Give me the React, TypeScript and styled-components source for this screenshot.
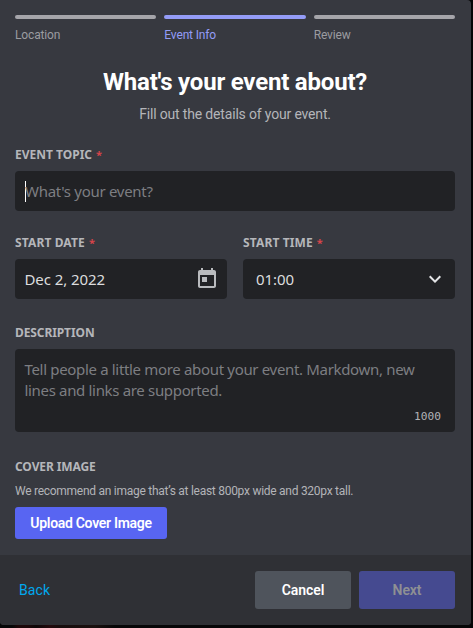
import React from 'react';
import styled, { createGlobalStyle } from 'styled-components';

const GlobalStyle = createGlobalStyle`
  * { box-sizing: border-box; }
  body {
    margin: 0;
    overflow: hidden;
    background: #060607;
    font-family: Roboto, "Noto Sans", sans-serif;
  }
  button { font: inherit; }
`;

const Backdrop = styled.div`
  width: 473px;
  height: 628px;
  background:
    linear-gradient(90deg, transparent 12px, #1c0709 18px, #1c0709 28px, #0d0607 36px, #240a0d 50px, #170d0d 60px, #1a100f 95px, transparent 115px) 0 100% / 100% 3px no-repeat,
    #060607;
`;

const Modal = styled.main`
  display: flex;
  flex-direction: column;
  width: 471px;
  height: 625px;
  overflow: hidden;
  border-radius: 0 4px 4px 4px;
  background: #373940;
`;

const Body = styled.div`
  flex: 1;
  padding: 15px 16px 0 15px;
`;

const Steps = styled.div`
  display: grid;
  grid-template-columns: repeat(3, 1fr);
  gap: 8px;
`;

const Step = styled.div<{ $active?: boolean }>`
  font-size: 12px;
  line-height: 16px;
  letter-spacing: -0.15px;
  color: ${(p) => (p.$active ? '#949cf7' : '#9b9ca0')};

  &::before {
    content: '';
    display: block;
    height: 4px;
    margin-bottom: 8px;
    border-radius: 2px;
    background: ${(p) => (p.$active ? '#949cf7' : '#a5a5aa')};
  }
`;

const Title = styled.h1`
  margin: 24px 0 0;
  font-size: 24px;
  line-height: 30px;
  font-weight: 700;
  letter-spacing: -0.2px;
  text-align: center;
  color: #fff;
`;

const Subtitle = styled.p`
  margin: 7px 0 23px;
  font-size: 14px;
  line-height: 20px;
  letter-spacing: -0.17px;
  text-align: center;
  color: #b4b5b9;
`;

const Field = styled.div<{ $gap?: number }>`
  margin-bottom: ${(p) => p.$gap ?? 0}px;
`;

const FieldRow = styled.div`
  display: grid;
  grid-template-columns: 212px 212px;
  justify-content: space-between;
  margin-bottom: 26px;
`;

const Label = styled.div<{ $tracking?: number }>`
  display: flex;
  gap: 4px;
  margin-bottom: 8px;
  font: 700 12px/16px "Noto Sans", sans-serif;
  letter-spacing: ${(p) => p.$tracking ?? -0.1}px;
  text-transform: uppercase;
  color: #b5b6ba;
`;

const Required = styled.span`
  font-size: 11px;
  color: #d8444a;
`;

const Control = styled.div<{ $left?: number }>`
  display: flex;
  align-items: center;
  justify-content: space-between;
  height: 40px;
  padding: 0 8px 0 ${(p) => p.$left ?? 9.5}px;
  border-radius: 4px;
  font: 15px/20px "Noto Sans", sans-serif;
  letter-spacing: -0.08px;
  color: #dcddde;
  background: #212225;
`;

const Caret = styled.span`
  width: 1px;
  height: 21px;
  margin-right: -1px;
  background: #fff;
`;

const Placeholder = styled.span`
  flex: 1;
  letter-spacing: -0.29px;
  color: #7d7e82;
`;

const Description = styled.div`
  display: flex;
  flex-direction: column;
  justify-content: space-between;
  height: 83px;
  padding: 10px 14px 7px 9.5px;
  border-radius: 4px;
  font: 15px/21px "Noto Sans", sans-serif;
  letter-spacing: -0.33px;
  color: #7d7e82;
  background: #212225;
`;

const Counter = styled.span`
  align-self: flex-end;
  font: 11.2px/16px "DejaVu Sans Mono", monospace;
  letter-spacing: 0;
  color: #b0b1b5;
`;

const Hint = styled.p`
  margin: 0 0 8px;
  font-size: 12px;
  line-height: 16px;
  letter-spacing: -0.27px;
  color: #b3b4b8;
`;

const Button = styled.button<{ $kind: 'upload' | 'cancel' | 'next' | 'link' }>`
  display: block;
  width: ${(p) => ({ upload: '152px', cancel: '96px', next: '96px', link: 'auto' })[p.$kind]};
  height: ${(p) => (p.$kind === 'upload' ? 32 : 38)}px;
  padding: ${(p) => (p.$kind === 'link' ? '0 4px' : '0')};
  border: 0;
  border-radius: 3px;
  font-size: 14px;
  font-weight: ${(p) => (p.$kind === 'link' ? 400 : 600)};
  letter-spacing: ${(p) => ({ upload: -0.3, cancel: -0.1, next: -0.1, link: 0.1 })[p.$kind]}px;
  color: ${(p) => ({ upload: '#fff', cancel: '#fff', next: '#8f9093', link: '#00a8ee' })[p.$kind]};
  background: ${(p) => ({ upload: '#5865f2', cancel: '#4f545c', next: '#454a90', link: 'none' })[p.$kind]};
`;

const Footer = styled.footer`
  display: flex;
  align-items: center;
  gap: 8px;
  height: 70px;
  padding: 0 16px 0 15px;
  background: #2f3035;
`;

const Spacer = styled.span`
  flex: 1;
`;

const CalendarIcon = () => (
  <svg width="24" height="24" viewBox="0 0 24 24" fill="#b9bbbe">
    <path d="M19 3h-1V1h-2v2H8V1H6v2H5c-1.11 0-1.99.9-1.99 2L3 19c0 1.1.89 2 2 2h14c1.1 0 2-.9 2-2V5c0-1.1-.9-2-2-2zm0 16H5V8h14v11zM7 10h5v5H7z" />
  </svg>
);

const ChevronIcon = () => (
  <svg width="24" height="24" viewBox="0 0 24 24" fill="#e4e5e7">
    <path d="M16.59 8.59 12 13.17 7.41 8.59 6 10l6 6 6-6z" />
  </svg>
);

export default function App() {
  return (
    <Backdrop>
      <GlobalStyle />
      <Modal>
        <Body>
          <Steps>
            <Step>Location</Step>
            <Step $active>Event Info</Step>
            <Step>Review</Step>
          </Steps>
          <Title>What's your event about?</Title>
          <Subtitle>Fill out the details of your event.</Subtitle>
          <Field $gap={24}>
            <Label $tracking={0}>Event Topic <Required>*</Required></Label>
            <Control $left={10}>
              <Caret />
              <Placeholder>What's your event?</Placeholder>
            </Control>
          </Field>
          <FieldRow>
            <Field>
              <Label $tracking={0.13}>Start Date <Required>*</Required></Label>
              <Control>Dec 2, 2022<CalendarIcon /></Control>
            </Field>
            <Field>
              <Label $tracking={0.13}>Start Time <Required>*</Required></Label>
              <Control $left={13}>01:00<ChevronIcon /></Control>
            </Field>
          </FieldRow>
          <Field $gap={27}>
            <Label>Description</Label>
            <Description>
              <span>Tell people a little more about your event. Markdown, new lines and links are supported.</span>
              <Counter>1000</Counter>
            </Description>
          </Field>
          <Field>
            <Label>Cover Image</Label>
            <Hint>We recommend an image that’s at least 800px wide and 320px tall.</Hint>
            <Button $kind="upload">Upload Cover Image</Button>
          </Field>
        </Body>
        <Footer>
          <Button $kind="link">Back</Button>
          <Spacer />
          <Button $kind="cancel">Cancel</Button>
          <Button $kind="next">Next</Button>
        </Footer>
      </Modal>
    </Backdrop>
  );
}
